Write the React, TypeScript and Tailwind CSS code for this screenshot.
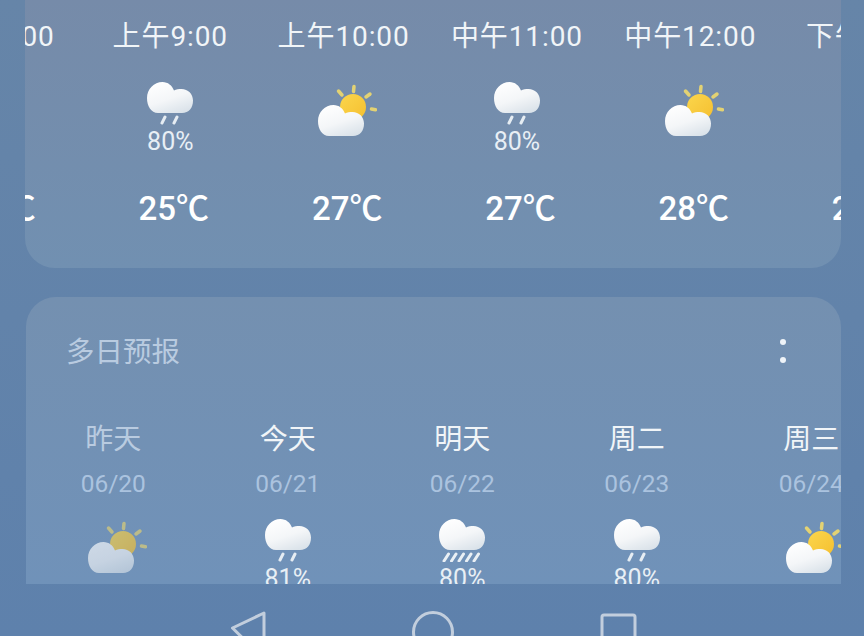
const hours = [
  { time: "上午8:00", temp: "24℃", kind: "rain" },
  { time: "上午9:00", temp: "25℃", kind: "rain" },
  { time: "上午10:00", temp: "27℃", kind: "sun" },
  { time: "中午11:00", temp: "27℃", kind: "rain" },
  { time: "中午12:00", temp: "28℃", kind: "sun" },
  { time: "下午1:00", temp: "28℃", kind: "rain" },
];

const days = [
  { label: "昨天", date: "06/20", kind: "sun", past: true },
  { label: "今天", date: "06/21", kind: "rain", pct: "81%" },
  { label: "明天", date: "06/22", kind: "heavy", pct: "80%" },
  { label: "周二", date: "06/23", kind: "rain", pct: "80%" },
  { label: "周三", date: "06/24", kind: "sun" },
];

const cloudPath =
  "M11 31 C4 31 0 24 0 16 C0 7 7 0 15.5 0 C21 0 25 3.5 27 8.5 C29 7.3 32 7 34.5 7 C41 7 46 12 46 18.5 C46 26 42 31 35 31 Z";

function RainIcon({ heavy }: { heavy?: boolean }) {
  return (
    <svg width="46" height="43" viewBox="0 0 46 43" className="block shrink-0">
      <defs>
        <linearGradient id="cloudFill" x1="0.2" y1="0" x2="0.7" y2="1">
          <stop offset="0" stopColor="#ffffff" />
          <stop offset="0.55" stopColor="#f4f6f8" />
          <stop offset="1" stopColor="#dbe3ea" />
        </linearGradient>
      </defs>
      <path d={cloudPath} fill="url(#cloudFill)" />
      {heavy ? (
        <g stroke="#eaf0f5" strokeWidth="3" strokeLinecap="round">
          <line x1="9.5" y1="35" x2="5" y2="42" />
          <line x1="17" y1="35" x2="12.5" y2="42" />
          <line x1="24.5" y1="35" x2="20" y2="42" />
          <line x1="32" y1="35" x2="27.5" y2="42" />
          <line x1="39.5" y1="35" x2="35" y2="42" />
        </g>
      ) : (
        <g stroke="#e6edf3" strokeWidth="3" strokeLinecap="round">
          <line x1="18" y1="35" x2="15" y2="41" />
          <line x1="30" y1="35" x2="27" y2="41" />
        </g>
      )}
    </svg>
  );
}

function SunIcon({ past }: { past?: boolean }) {
  return (
    <svg
      width="59"
      height="52"
      viewBox="0 0 59 52"
      className={`block shrink-0 ${past ? "opacity-65" : ""}`}
    >
      <defs>
        <linearGradient id="sunFill" x1="0" y1="0" x2="1" y2="1">
          <stop offset="0" stopColor="#fbd64c" />
          <stop offset="1" stopColor="#f5bf30" />
        </linearGradient>
        <linearGradient id="sunCloudFill" x1="0.2" y1="0" x2="0.7" y2="1">
          <stop offset="0" stopColor="#ffffff" />
          <stop offset="0.55" stopColor="#f4f6f8" />
          <stop offset="1" stopColor="#dbe3ea" />
        </linearGradient>
      </defs>
      <g stroke="#e3d273" strokeWidth="3.5" strokeLinecap="round">
        <line x1="36" y1="2.5" x2="35.5" y2="7.5" />
        <line x1="20.5" y1="7" x2="24" y2="11" />
        <line x1="52" y1="10" x2="48" y2="13" />
        <line x1="53.5" y1="25" x2="57.5" y2="25.8" />
      </g>
      <circle cx="35" cy="23" r="13" fill="url(#sunFill)" />
      <path transform="translate(0 21)" d={cloudPath} fill="url(#sunCloudFill)" />
    </svg>
  );
}

function NavBar() {
  return (
    <div className="flex h-[52px] overflow-hidden pl-[229px]">
      <svg width="38" height="52" viewBox="0 0 38 52" className="shrink-0">
        <path
          d="M35 29 L3.5 44 L35 75 Z"
          fill="none"
          stroke="#c2cedd"
          strokeWidth="3"
          strokeLinejoin="round"
        />
      </svg>
      <svg width="44" height="52" viewBox="0 0 44 52" className="ml-[144px] shrink-0">
        <circle cx="22" cy="48" r="19.5" fill="none" stroke="#c2cedd" strokeWidth="3" />
      </svg>
      <svg width="37" height="52" viewBox="0 0 37 52" className="ml-[145px] shrink-0">
        <rect x="2" y="31" width="33" height="40" rx="2" fill="none" stroke="#c2cedd" strokeWidth="3" />
      </svg>
    </div>
  );
}

export default function App() {
  return (
    <div className="h-[636px] w-[864px] overflow-hidden bg-linear-to-b from-[#6685a8] to-[#5e81ac] font-[Roboto,'Noto_Sans_CJK_SC',sans-serif]">
      {/* Hourly */}
      <div className="ml-[25px] h-[268px] w-[816px] overflow-hidden rounded-b-[30px] bg-linear-to-b from-[#768ba9] to-[#7190b1]">
        <div className="ml-[-114.7px] flex">
          {hours.map((h) => (
            <div key={h.time} className="flex w-[173.33px] shrink-0 flex-col items-center pt-[17px]">
              <div className="whitespace-nowrap text-[28px] leading-10 tracking-[0.9px] text-[#f1f5f8]">{h.time}</div>
              <div className="mt-[25px] flex h-[107px] flex-col items-center">
                {h.kind === "rain" ? (
                  <>
                    <RainIcon />
                    <div className="mt-px text-[25px] leading-8 text-[#e8eff5]">80%</div>
                  </>
                ) : (
                  <div className="ml-2 mt-[2px]">
                    <SunIcon />
                  </div>
                )}
              </div>
              <div className="ml-[7px] whitespace-nowrap text-[33px] font-medium leading-10 text-white">{h.temp}</div>
            </div>
          ))}
        </div>
      </div>

      {/* Multi-day */}
      <div className="ml-[26px] mt-[29px] h-[287px] w-[815px] overflow-hidden rounded-t-[30px] bg-linear-to-b from-[#7490b0] to-[#7092b9]">
        <div className="flex items-center justify-between pl-10 pr-[55px] pt-9">
          <div className="text-[28.5px] leading-10 text-[#b9cbe0]">多日预报</div>
          <div className="mt-[-4px] flex flex-col gap-3">
            <div className="h-[6px] w-[6px] rounded-full bg-[#eef3f8]" />
            <div className="h-[6px] w-[6px] rounded-full bg-[#eef3f8]" />
          </div>
        </div>
        <div className="mt-[47px] flex">
          {days.map((d) => (
            <div key={d.date} className="flex w-[174.5px] shrink-0 flex-col items-center">
              <div className={`text-[28px] leading-10 ${d.past ? "text-[#b9cbe0]" : "text-[#f1f5f8]"}`}>{d.label}</div>
              <div className="mt-2 whitespace-nowrap text-[24.5px] leading-8 text-[#abc3df]">{d.date}</div>
              <div className="mt-[19px] flex flex-col items-center">
                {d.kind === "sun" ? (
                  <div className="ml-2 mt-[2px]">
                    <SunIcon past={d.past} />
                  </div>
                ) : (
                  <>
                    <RainIcon heavy={d.kind === "heavy"} />
                    <div className="mt-px text-[25px] leading-8 text-[#e8eff5]">{d.pct}</div>
                  </>
                )}
              </div>
            </div>
          ))}
        </div>
      </div>

      <NavBar />
    </div>
  );
}
